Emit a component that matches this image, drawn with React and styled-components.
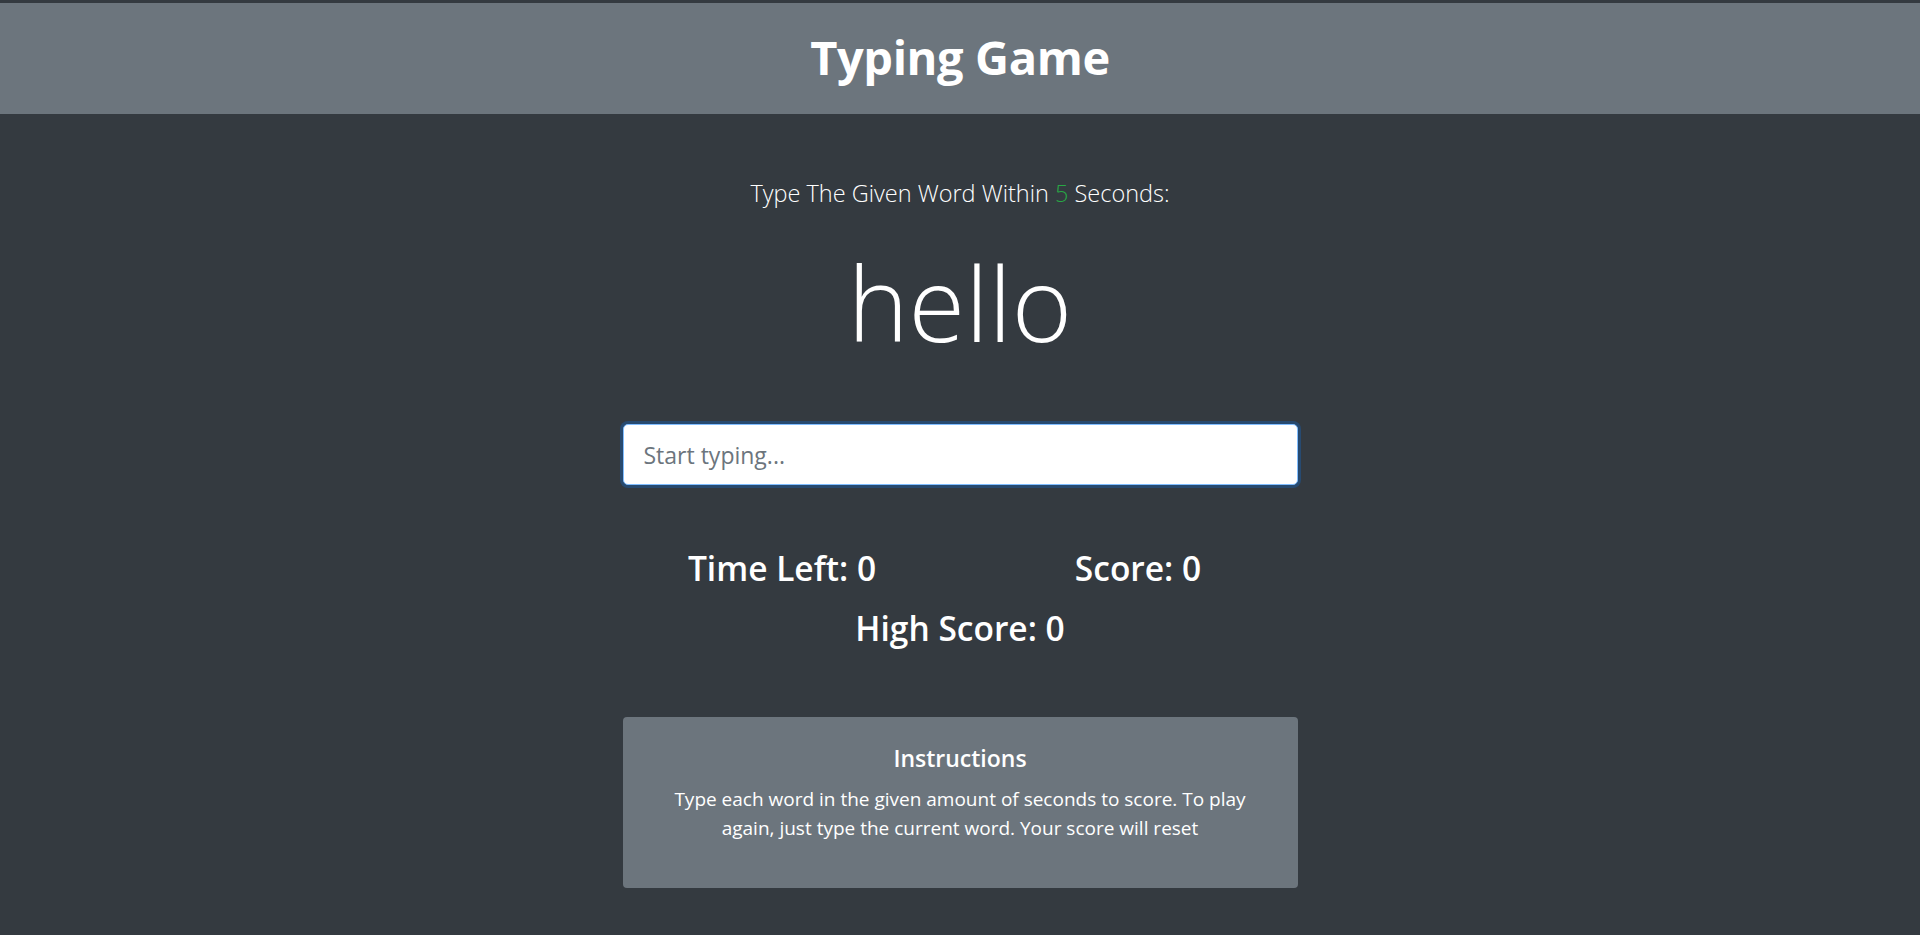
import React, { useState } from 'react';
import styled, { createGlobalStyle } from 'styled-components';

const GlobalStyle = createGlobalStyle`
  body {
    margin: 0;
    background: #343a40;
    color: #fff;
    font-family: "Open Sans", "Noto Sans", sans-serif;
  }
`;

const Header = styled.header`
  box-sizing: border-box;
  margin-top: 3px;
  height: 111px;
  padding-bottom: 4px;
  background: #6c757d;
  display: flex;
  align-items: center;
  justify-content: center;
`;

const Title = styled.h1`
  margin: 0;
  font-size: 47px;
  font-weight: 700;
  letter-spacing: -0.4px;
`;

const Main = styled.main`
  display: flex;
  flex-direction: column;
  align-items: center;
  padding-top: 62px;
`;

const Lead = styled.p`
  margin: 0;
  font-size: 23.5px;
  font-weight: 300;
  line-height: 1.5;
`;

const Seconds = styled.span`
  color: #28a745;
`;

const Word = styled.h2`
  margin: 40px 0 0;
  font-size: 103px;
  font-weight: 300;
  line-height: 1;
`;

const WordInput = styled.input`
  box-sizing: border-box;
  margin-top: 70px;
  width: 675px;
  height: 61px;
  padding: 0 20px;
  border: 1px solid #80bdff;
  border-radius: 5px;
  box-shadow: 0 0 0 3px rgba(0, 123, 255, 0.25);
  background: #fff;
  color: #495057;
  font-family: inherit;
  font-size: 23px;
  outline: none;

  &::placeholder {
    color: #6c757d;
  }
`;

const Stats = styled.div`
  display: grid;
  grid-template-columns: 1fr 1fr;
  width: 712px;
  margin-top: 60px;
  row-gap: 13px;
`;

const Stat = styled.h3`
  margin: 0;
  text-align: center;
  font-size: 33.5px;
  font-weight: 600;
  line-height: 1.4;
  grid-column: ${props => (props.wide ? '1 / span 2' : 'auto')};
`;

const Card = styled.section`
  box-sizing: border-box;
  margin-top: 65px;
  width: 675px;
  height: 171px;
  padding: 27px 40px 20px;
  background: #6c757d;
  border-radius: 4px;
  text-align: center;
`;

const CardTitle = styled.h4`
  margin: 0 0 11px;
  font-size: 23px;
  font-weight: 600;
  line-height: 1.3;
`;

const CardText = styled.p`
  margin: 0;
  font-size: 19px;
  line-height: 1.55;
`;

const App = () => {
  const [text, setText] = useState('');

  return (
    <>
      <GlobalStyle />
      <Header>
        <Title>Typing Game</Title>
      </Header>
      <Main>
        <Lead>
          Type The Given Word Within <Seconds>5</Seconds> Seconds:
        </Lead>
        <Word>hello</Word>
        <WordInput
          type="text"
          placeholder="Start typing..."
          value={text}
          onChange={(e) => setText(e.target.value)}
          autoFocus
        />
        <Stats>
          <Stat>Time Left: 0</Stat>
          <Stat>Score: 0</Stat>
          <Stat wide>High Score: 0</Stat>
        </Stats>
        <Card>
          <CardTitle>Instructions</CardTitle>
          <CardText>
            Type each word in the given amount of seconds to score. To play again, just type the current word. Your score will reset
          </CardText>
        </Card>
      </Main>
    </>
  );
};

export default App;
